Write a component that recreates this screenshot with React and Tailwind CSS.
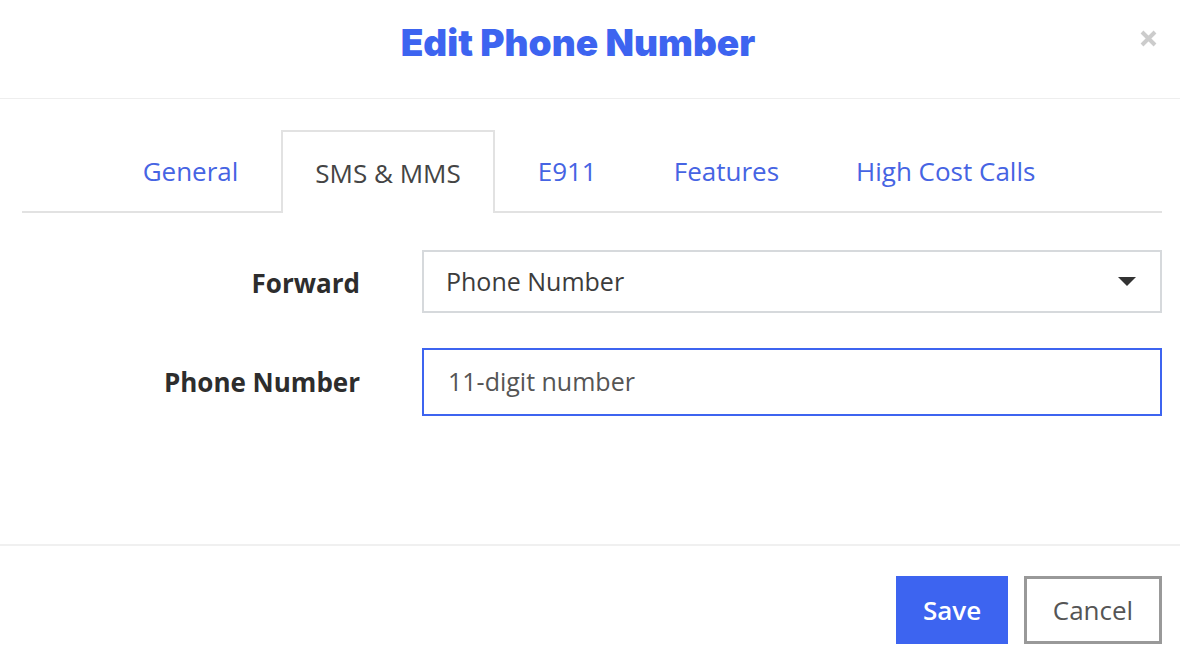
import React from 'react';

const tabs = ['General', 'SMS & MMS', 'E911', 'Features', 'High Cost Calls'];

export default function App() {
  const active = 'SMS & MMS';

  return (
    <div className="w-[1180px] h-[664px] bg-white flex flex-col font-['Open_Sans','Liberation_Sans',sans-serif]">
      {/* header */}
      <div className="relative h-[99px] border-b border-[#eeeeee] flex items-center justify-center pb-[12px] pr-[24px]">
        <h1 className="text-[37px] font-black text-[#3d64f0] tracking-[0px] font-['Inter','Open_Sans',sans-serif]">
          Edit Phone Number
        </h1>
        <button className="absolute right-[23px] top-[30px]">
          <svg width="17" height="17" viewBox="0 0 17 17">
            <path d="M2 2 L15 15 M15 2 L2 15" stroke="#cccccc" strokeWidth="4" />
          </svg>
        </button>
      </div>

      {/* tabs */}
      <div className="pl-[22px] pr-[18px] pt-[31px]">
        <div className="flex justify-center gap-[9px] border-b-2 border-[#e2e2e2] h-[83px] pr-[6px]">
          {tabs.map(tab => (
            <div
              key={tab}
              className={
                tab === active
                  ? 'px-[32px] flex items-center border-2 border-b-0 border-[#e2e2e2] bg-white mb-[-2px] text-[26px] text-[#444444] pt-[2px]'
                  : 'px-[32px] flex items-center border-2 border-transparent text-[26px] text-[#4664e3] pt-[2px]'
              }
            >
              {tab}
            </div>
          ))}
        </div>
      </div>

      {/* form */}
      <div className="flex-1 px-[18px] pt-[37px]">
        <div className="grid grid-cols-[342px_1fr] gap-x-[62px] gap-y-[35px] items-center">
          <label className="text-right text-[26px] font-bold text-[#2d2d2d] pt-[3px]">Forward</label>
          <div className="h-[63px] border-2 border-[#d6d9dc] flex items-center justify-between pl-[22px] pr-[24px]">
            <span className="text-[25px] text-[#3c3c3c]">Phone Number</span>
            <svg width="18" height="10" viewBox="0 0 18 10">
              <path d="M0 0 L18 0 L9 9 Z" fill="#333333" />
            </svg>
          </div>

          <label className="text-right text-[26px] font-bold text-[#2d2d2d]">Phone Number</label>
          <div className="h-[68px] border-2 border-[#3d64f0] flex items-center pl-[24px]">
            <span className="text-[25px] text-[#555555]">11-digit number</span>
          </div>
        </div>
      </div>

      {/* footer */}
      <div className="h-[120px] border-t-2 border-[#f0f0f0] flex justify-end items-start gap-[16px] pt-[30px] pr-[18px]">
        <button className="w-[112px] h-[68px] bg-[#3d64f0] text-white text-[26px] font-semibold">
          Save
        </button>
        <button className="w-[138px] h-[68px] border-[3px] border-[#999999] text-[#555555] text-[26px]">
          Cancel
        </button>
      </div>
    </div>
  );
}
